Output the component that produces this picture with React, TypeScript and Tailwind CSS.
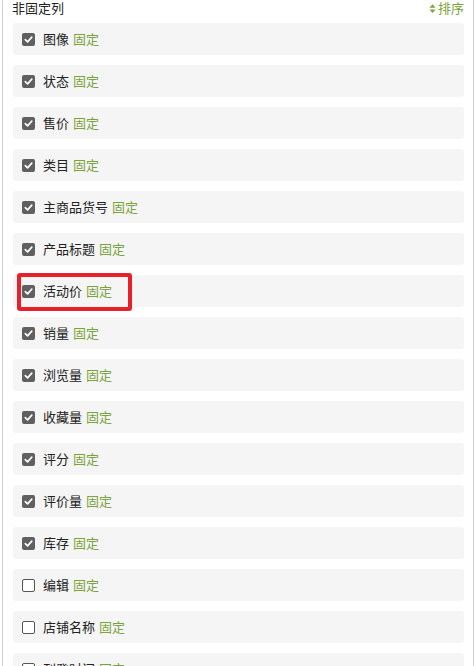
import React from 'react';

const items: { label: string; checked: boolean }[] = [
  { label: '图像', checked: true },
  { label: '状态', checked: true },
  { label: '售价', checked: true },
  { label: '类目', checked: true },
  { label: '主商品货号', checked: true },
  { label: '产品标题', checked: true },
  { label: '活动价', checked: true },
  { label: '销量', checked: true },
  { label: '浏览量', checked: true },
  { label: '收藏量', checked: true },
  { label: '评分', checked: true },
  { label: '评价量', checked: true },
  { label: '库存', checked: true },
  { label: '编辑', checked: false },
  { label: '店铺名称', checked: false },
  { label: '刊登时间', checked: false },
];

function Check({ checked }: { checked: boolean }) {
  if (!checked) {
    return <span className="w-[13px] h-[13px] rounded-[2px] border border-[#555] bg-white flex-shrink-0" />;
  }
  return (
    <span className="w-[13px] h-[13px] rounded-[2px] bg-[#606060] flex items-center justify-center flex-shrink-0">
      <svg viewBox="0 0 12 12" className="w-[11px] h-[11px]">
        <path d="M2.5 6.2 L5 8.6 L9.6 3.4" fill="none" stroke="#fff" strokeWidth="1.8" strokeLinecap="round" strokeLinejoin="round" />
      </svg>
    </span>
  );
}

export default function App() {
  return (
    <div className="w-[476px] h-[666px] overflow-hidden bg-white" style={{ fontFamily: '"Noto Sans CJK SC", "Liberation Sans", sans-serif' }}>
      <div className="ml-[2px] w-[472px] min-h-[666px] border-x border-[#cfcfcf] pl-[10px] pr-[9px]">
        <div className="flex items-center justify-between h-[16px] text-[13px] leading-[16px]">
          <span className="text-[#222] -ml-[1px]">非固定列</span>
          <span className="flex items-center gap-[2px] text-[#7aa33c]">
            <svg viewBox="0 0 8 12" className="w-[7px] h-[11px]">
              <path d="M4 1 L7.5 5 L0.5 5 Z M4 11 L7.5 7 L0.5 7 Z" fill="#7aa33c" />
            </svg>
            排序
          </span>
        </div>
        <div className="flex flex-col gap-[10px] mt-[7px]">
          {items.map((it) => (
            <div key={it.label} className="relative h-[32px] bg-[#f5f5f5] rounded-[3px] flex items-center pl-[9px] text-[13px]">
              <Check checked={it.checked} />
              <span className="ml-[8px] text-[#222]">{it.label}</span>
              <span className="ml-[4px] text-[#7aa33c]">固定</span>
              {it.label === '活动价' && (
                <div className="absolute left-[4px] top-[-2px] w-[115px] h-[38px] border-4 border-[#e8202a] rounded-[3px]" />
              )}
            </div>
          ))}
        </div>
      </div>
    </div>
  );
}
